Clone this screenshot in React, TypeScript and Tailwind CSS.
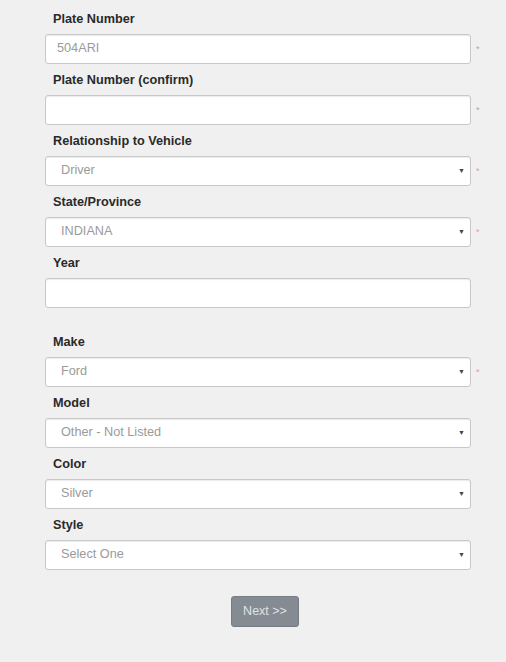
const fields: { label: string; value: string; select: boolean; required: boolean; gapBefore?: boolean; grayStar?: boolean }[] = [
  { label: 'Plate Number', value: '504ARI', select: false, required: true, grayStar: true },
  { label: 'Plate Number (confirm)', value: '', select: false, required: true, grayStar: true },
  { label: 'Relationship to Vehicle', value: 'Driver', select: true, required: true },
  { label: 'State/Province', value: 'INDIANA', select: true, required: true },
  { label: 'Year', value: '', select: false, required: false },
  { label: 'Make', value: 'Ford', select: true, required: true, gapBefore: true },
  { label: 'Model', value: 'Other - Not Listed', select: true, required: false },
  { label: 'Color', value: 'Silver', select: true, required: false },
  { label: 'Style', value: 'Select One', select: true, required: false },
]

export default function App() {
  return (
    <div
      className="min-h-[662px] w-[506px] bg-[#f0f0f0] pt-[3px]"
      style={{ fontFamily: '"Liberation Sans", Arial, sans-serif' }}
    >
      <div className="flex flex-col">
        {fields.map((f) => (
          <div key={f.label} className={f.gapBefore ? 'mt-[18px]' : ''}>
            <div className="mt-2 mb-[7px] h-4 pl-[53px] text-[12.7px] font-bold leading-4 text-[#2a2a2a]">
              {f.label}
            </div>
            <div className="flex items-center">
              <div className="ml-[45px] flex h-[30px] w-[426px] items-center justify-between rounded-[3px] border border-[#c8c8c8] bg-white shadow-[inset_0_1px_1px_rgba(0,0,0,0.08)]">
                <span className={`${f.select ? 'pl-[15px]' : 'pl-[11px]'} text-[12.7px] text-[#9a9a9a]`}>{f.value}</span>
                {f.select && <span className="pr-[5px] text-[7px] text-[#444]">▼</span>}
              </div>
              {f.required && (
                <span className={`ml-[5px] text-[9px] leading-none ${f.grayStar ? 'text-[#b0a8aa]' : 'text-[#e0a0a8]'}`}>*</span>
              )}
            </div>
          </div>
        ))}
      </div>
      <div className="mt-[26px] flex justify-center pl-[24px]">
        <button className="h-[31px] w-[68px] rounded-[3px] border border-[#777d84] bg-[#858b93] text-[12.5px] text-[#dfe3e7]">
          Next &gt;&gt;
        </button>
      </div>
    </div>
  )
}
